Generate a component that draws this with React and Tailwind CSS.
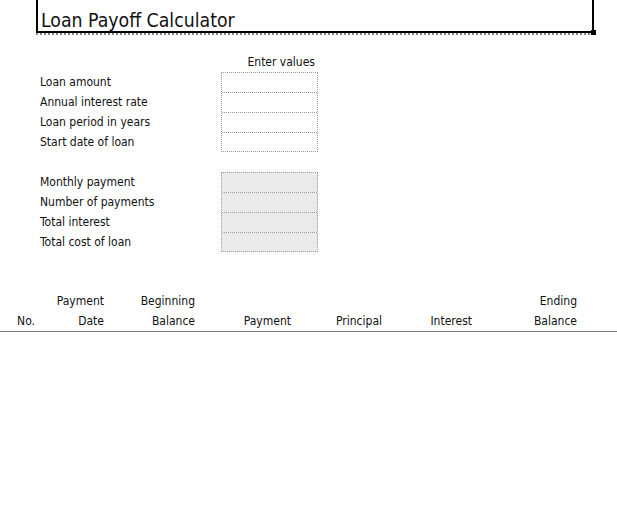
import React from "react";

const inputs = ["Loan amount", "Annual interest rate", "Loan period in years", "Start date of loan"];
const outputs = ["Monthly payment", "Number of payments", "Total interest", "Total cost of loan"];

const cols = [
  ["", "No."],
  ["Payment", "Date"],
  ["Beginning", "Balance"],
  ["", "Payment"],
  ["", "Principal"],
  ["", "Interest"],
  ["Ending", "Balance"],
];

function Group({ labels, shaded }) {
  return (
    <div className="flex">
      <div className="w-[221px] pl-[40px]">
        {labels.map((l) => (
          <div key={l} className="h-[20px] leading-[20px]">{l}</div>
        ))}
      </div>
      <div className={`w-[97px] h-[80px] border border-dotted border-[#9a9a9a] ${shaded ? "bg-[#eaeaea]" : "bg-white"}`}>
        {labels.map((l, i) => (
          <div
            key={l}
            className={i < labels.length - 1 ? "h-[20px] border-b border-dotted border-[#9a9a9a]" : "h-[18px]"}
          />
        ))}
      </div>
    </div>
  );
}

export default function App() {
  return (
    <div
      className="w-[617px] h-[505px] bg-white text-[#111] text-[12px] overflow-hidden"
      style={{ fontFamily: '"DejaVu Sans Condensed", Tahoma, "DejaVu Sans", sans-serif' }}
    >
      <div className="pl-[36px]">
        <div className="relative w-[558px]">
          <div className="h-[33px] border-l-2 border-r-2 border-b-2 border-black pl-[3px] text-[19.3px] leading-[41px] whitespace-nowrap">
            Loan Payoff Calculator
          </div>
          <div className="h-[2px] border-b-2 border-dotted border-[#8a8a8a]" />
          <div className="absolute right-[-2px] top-[30px] w-[5px] h-[5px] bg-black" />
        </div>
      </div>

      <div className="h-[17px]" />
      <div className="w-[315px] text-right h-[20px] leading-[20px]">Enter values</div>
      <Group labels={inputs} />
      <div className="h-[20px]" />
      <Group labels={outputs} shaded />

      <div className="h-[39px]" />
      <div className="grid grid-cols-[36px_69px_91px_96px_91px_90px_105px] border-b border-[#808080]">
        {[0, 1].map((r) =>
          cols.map((c, i) => (
            <div key={`${r}-${i}`} className="h-[20px] leading-[20px] text-right pr-[1px]">
              {c[r]}
            </div>
          ))
        )}
      </div>
    </div>
  );
}
